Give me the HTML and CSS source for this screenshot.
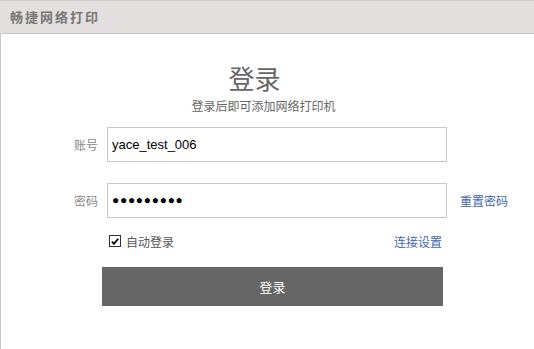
FILE: index.html
```html
<!DOCTYPE html>
<html>
<head>
<meta charset="utf-8">
<link rel="stylesheet" href="styles.css">
</head>
<body>
<div class="app">
  <div class="topbar">畅捷网络打印</div>
  <div class="main">
    <div class="title">登录</div>
    <div class="subtitle">登录后即可添加网络打印机</div>
    <div class="form">
      <div class="row row-user">
        <label class="label">账号</label>
        <div class="input">yace_test_006</div>
      </div>
      <div class="row row-pass">
        <label class="label">密码</label>
        <div class="input dots">●●●●●●●●●</div>
        <a class="link reset">重置密码</a>
      </div>
      <div class="opts">
        <span class="check">
          <span class="box"><svg width="11" height="11" viewBox="0 0 11 11"><path d="M2 5.5 L4.3 8 L9 2.5" fill="none" stroke="#000" stroke-width="2"/></svg></span>
          <span class="check-text">自动登录</span>
        </span>
        <a class="link">连接设置</a>
      </div>
      <div class="btn">登录</div>
    </div>
  </div>
</div>
</body>
</html>
```
FILE: styles.css
```css
html, body {
  margin: 0;
  padding: 0;
  background: #fff;
  font-family: "Noto Sans CJK SC", "Noto Sans", sans-serif;
}
.app {
  width: 534px;
  height: 349px;
  display: flex;
  flex-direction: column;
}
.topbar {
  height: 32px;
  border-top: 1px solid #cdcbca;
  border-bottom: 1px solid #c8c6c5;
  background: #e2dfde;
  color: #777;
  font-weight: bold;
  font-size: 13px;
  line-height: 32px;
  padding-left: 10px;
  letter-spacing: 2px;
}
.main {
  flex: 1;
  border-left: 1px solid #c8c8c8;
  display: flex;
  flex-direction: column;
}
.title {
  margin-top: 27px;
  font-size: 26px;
  line-height: 34px;
  color: #666;
  text-align: center;
  padding-right: 26px;
}
.subtitle {
  font-size: 12px;
  line-height: 16px;
  color: #666;
  text-align: center;
  padding-right: 8px;
  margin-top: 3px;
}
.form {
  display: flex;
  flex-direction: column;
  padding-left: 59px;
  margin-top: 13px;
}
.row {
  display: flex;
  align-items: center;
  height: 35px;
}
.row-pass {
  margin-top: 21px;
}
.label {
  width: 38px;
  text-align: right;
  font-size: 12px;
  color: #888;
  margin-right: 9px;
}
.input {
  box-sizing: border-box;
  width: 340px;
  height: 35px;
  border: 1px solid #c8c8c8;
  font-family: "Liberation Sans", "Noto Sans CJK SC", sans-serif;
  font-size: 13px;
  color: #000;
  line-height: 33px;
  padding-left: 4px;
}
.dots {
  font-size: 12px;
  letter-spacing: 0.7px;
  padding-left: 4px;
}
.link {
  font-size: 12px;
  color: #3e67b1;
  cursor: pointer;
}
.reset {
  margin-left: 13px;
}
.opts {
  display: flex;
  justify-content: space-between;
  align-items: center;
  margin-left: 49px;
  width: 333px;
  margin-top: 12px;
  height: 22px;
}
.check {
  display: flex;
  align-items: center;
}
.box {
  box-sizing: border-box;
  width: 12px;
  height: 12px;
  border: 1px solid #333;
  background: #fff;
  display: flex;
  align-items: center;
  justify-content: center;
  margin-right: 5px;
}
.box svg {
  display: block;
}
.check-text {
  font-size: 12px;
  color: #555;
}
.btn {
  margin-left: 42px;
  margin-top: 15px;
  width: 341px;
  height: 39px;
  background: #666;
  color: #fff;
  font-size: 13px;
  line-height: 39px;
  text-align: center;
}
```
